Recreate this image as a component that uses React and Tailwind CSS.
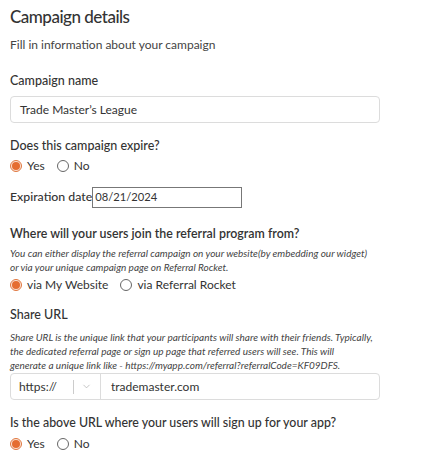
import React from "react";
import { ChevronDown } from "lucide-react";

const Radio = ({ checked, label }) => (
  <label className="flex items-center gap-[5px]">
    <span
      className={`w-[12px] h-[12px] rounded-full border flex items-center justify-center ${
        checked ? "border-[#e0773f] bg-[#fbe3d6]" : "border-[#666] bg-white"
      }`}
    >
      {checked && <span className="w-[8px] h-[8px] rounded-full bg-[#e56d31]" />}
    </span>
    <span>{label}</span>
  </label>
);

export default function App() {
  return (
    <div className="w-[434px] h-[472px] bg-white px-[10px] text-[#333] font-['Lato',sans-serif] overflow-hidden">
      {/* Header */}
      <h1 className="pt-[3px] text-[17px] leading-[28px] font-medium tracking-[-0.5px] text-[#333]">Campaign details</h1>
      <p className="mt-[5px] text-[12px] leading-[18px] text-[#444]">Fill in information about your campaign</p>

      {/* Campaign name */}
      <div className="mt-[18px] text-[12.5px] leading-[18px] font-medium">Campaign name</div>
      <div className="mt-[6px] w-[370px] h-[27px] border border-[#dcdcdc] rounded-[4px] flex items-center px-[9px] text-[12px]">
        Trade Master’s League
      </div>

      {/* Expiry */}
      <div className="mt-[14px] text-[12.5px] leading-[18px] font-medium">Does this campaign expire?</div>
      <div className="mt-[2px] flex items-center gap-[12px] text-[12px] leading-[18px]">
        <Radio checked label="Yes" />
        <Radio label="No" />
      </div>

      <div className="mt-[12px] flex items-center text-[12.3px] font-medium">
        <span>Expiration date</span>
        <div className="w-[150px] h-[21px] border border-[#777] flex items-center px-[2px] font-normal text-[11.2px]">
          08/21/2024
        </div>
      </div>

      {/* Referral program */}
      <div className="mt-[17px] text-[12.4px] leading-[18px] font-semibold">
        Where will your users join the referral program from?
      </div>
      <p className="mt-[3px] text-[10px] leading-[14px] italic text-[#444]">
        You can either display the referral campaign on your website(by embedding our widget)
        <br />
        or via your unique campaign page on Referral Rocket.
      </p>
      <div className="mt-[2px] flex items-center gap-[12px] text-[12px] leading-[18px]">
        <Radio checked label="via My Website" />
        <Radio label="via Referral Rocket" />
      </div>

      {/* Share URL */}
      <div className="mt-[12px] text-[12.5px] leading-[18px] font-medium">Share URL</div>
      <p className="mt-[6px] text-[10px] leading-[14px] italic text-[#444] whitespace-nowrap">
        Share URL is the unique link that your participants will share with their friends. Typically,
        <br />
        the dedicated referral page or sign up page that referred users will see. This will
        <br />
        generate a unique link like - https://myapp.com/referral?referralCode=KF09DFS.
      </p>
      <div className="mt-[1px] w-[370px] h-[27px] border border-[#dcdcdc] rounded-[4px] flex text-[12px]">
        <div className="w-[90px] flex items-center border-r border-[#dcdcdc]">
          <span className="pl-[8px] w-[62px]">https://</span>
          <span className="h-[14px] border-l border-[#ccc]" />
          <ChevronDown className="ml-[7px] w-[11px] h-[11px] text-[#aaa]" strokeWidth={1.5} />
        </div>
        <div className="flex items-center pl-[10px]">trademaster.com</div>
      </div>

      {/* Signup */}
      <div className="mt-[14px] text-[12.4px] leading-[18px] font-medium">
        Is the above URL where your users will sign up for your app?
      </div>
      <div className="mt-[3px] flex items-center gap-[12px] text-[12px] leading-[18px]">
        <Radio checked label="Yes" />
        <Radio label="No" />
      </div>
    </div>
  );
}
